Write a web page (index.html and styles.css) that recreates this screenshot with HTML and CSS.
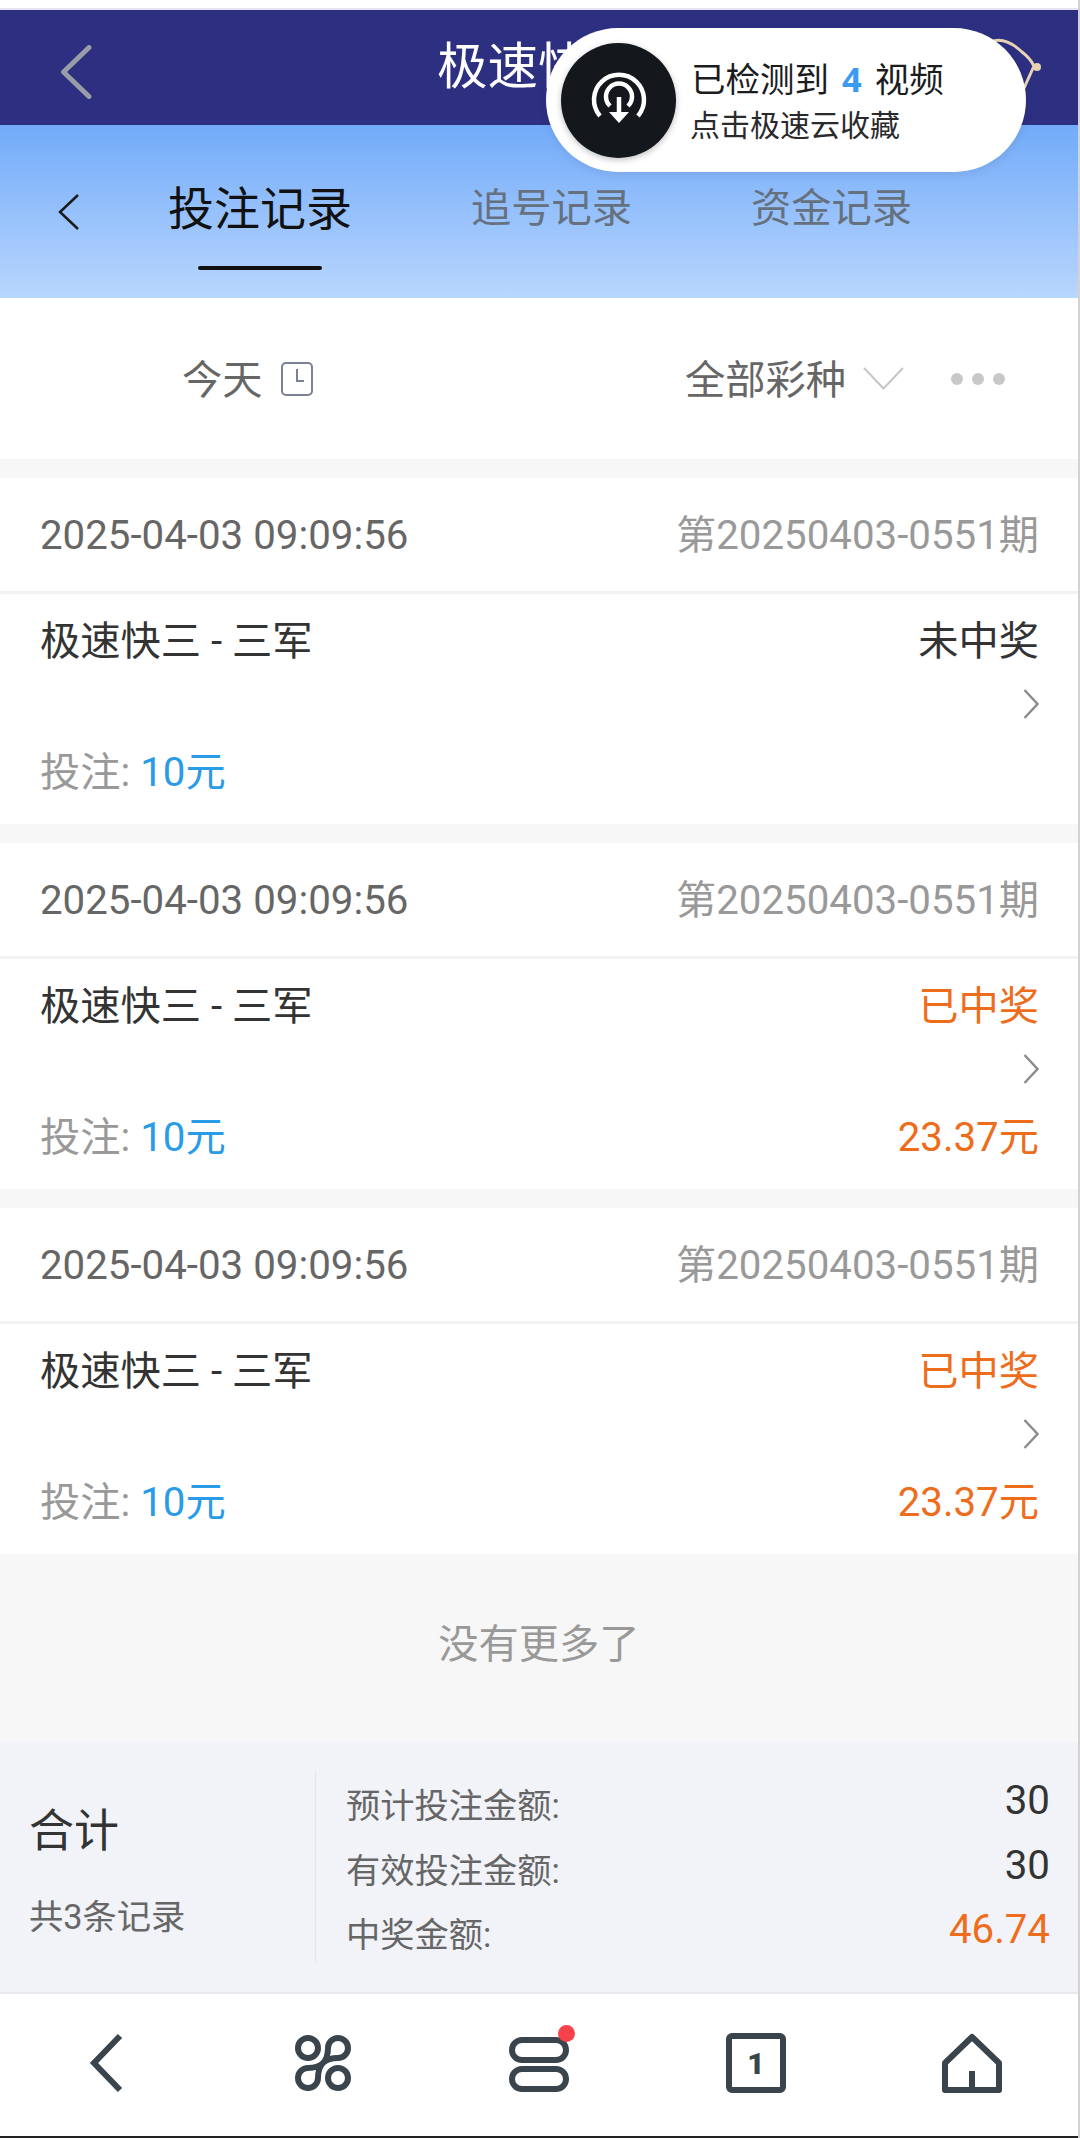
FILE: index.html
```html
<!DOCTYPE html>
<html lang="zh-CN">
<head>
<meta charset="utf-8">
<title>投注记录</title>
<link rel="stylesheet" href="styles.css">
</head>
<body>
<div class="page">
  <header class="topbar">
    <svg class="topbar-back" width="32" height="54" viewBox="0 0 32 54"><path d="M29 2.500 L3.500 27 L29 51.500" fill="none" stroke="#9a9ca8" stroke-width="5" stroke-linecap="round" stroke-linejoin="round"/></svg>
    <div class="topbar-title">极速快三</div>
    <svg class="topbar-logo" width="60" height="60" viewBox="0 0 60 60"><path d="M0 7 Q15 1 32 17 Q40 23 44 31 Q40 40 34 53" fill="none" stroke="#e8d3b5" stroke-width="3"/><circle cx="47" cy="32" r="4" fill="#e8d3b5"/></svg>
  </header>

  <aside class="toast">
    <div class="toast-icon">
      <svg width="60" height="60" viewBox="0 0 60 60"><path d="M11 46 A25 25 0 1 1 49 46" fill="none" stroke="#fff" stroke-width="4.500"/><path d="M21 36 A13 13 0 1 1 39 36" fill="none" stroke="#fff" stroke-width="4.500"/><path d="M30 27 V44" fill="none" stroke="#fff" stroke-width="4.500"/><path d="M20 42 H40 L30 53 Z" fill="#fff"/></svg>
    </div>
    <div class="toast-text">
      <div class="toast-line1">已检测到<span class="toast-count">4</span>视频</div>
      <div class="toast-line2">点击极速云收藏</div>
    </div>
  </aside>

  <nav class="tabs">
    <svg class="tabs-back" width="22" height="36" viewBox="0 0 22 36"><path d="M20 1 L2 18 L20 35" fill="none" stroke="#1a1a1a" stroke-width="2.500"/></svg>
    <div class="tab tab-active">投注记录</div>
    <div class="tab">追号记录</div>
    <div class="tab">资金记录</div>
  </nav>

  <section class="filters">
    <div class="filter-day">
      <span>今天</span>
      <svg width="32" height="34" viewBox="0 0 32 34"><rect x="1" y="1" width="30" height="32" rx="4" fill="none" stroke="#7a8196" stroke-width="2"/><path d="M16 7 V19 H23" fill="none" stroke="#7a8196" stroke-width="2"/></svg>
    </div>
    <div class="filter-kind">
      <span>全部彩种</span>
      <svg width="41" height="23" viewBox="0 0 41 23"><path d="M1 1 L20.500 21.500 L40 1" fill="none" stroke="#c6c6c6" stroke-width="2"/></svg>
      <div class="dots"><i></i><i></i><i></i></div>
    </div>
  </section>

  <main class="list">
    <article class="card">
      <div class="card-head"><span class="date">2025-04-03 09:09:56</span><span class="issue">第20250403-0551期</span></div>
      <div class="card-body">
        <div class="row"><span class="name">极速快三 - 三军</span><span class="status">未中奖</span></div>
        <svg class="more" width="16" height="30" viewBox="0 0 16 30"><path d="M1.500 1 L14.500 15 L1.500 29" fill="none" stroke="#8c8c8c" stroke-width="2.500"/></svg>
        <div class="row row-last"><span class="stake">投注: <b>10元</b></span></div>
      </div>
    </article>
    <article class="card">
      <div class="card-head"><span class="date">2025-04-03 09:09:56</span><span class="issue">第20250403-0551期</span></div>
      <div class="card-body">
        <div class="row"><span class="name">极速快三 - 三军</span><span class="status won">已中奖</span></div>
        <svg class="more" width="16" height="30" viewBox="0 0 16 30"><path d="M1.500 1 L14.500 15 L1.500 29" fill="none" stroke="#8c8c8c" stroke-width="2.500"/></svg>
        <div class="row row-last"><span class="stake">投注: <b>10元</b></span><span class="status won">23.37元</span></div>
      </div>
    </article>
    <article class="card">
      <div class="card-head"><span class="date">2025-04-03 09:09:56</span><span class="issue">第20250403-0551期</span></div>
      <div class="card-body">
        <div class="row"><span class="name">极速快三 - 三军</span><span class="status won">已中奖</span></div>
        <svg class="more" width="16" height="30" viewBox="0 0 16 30"><path d="M1.500 1 L14.500 15 L1.500 29" fill="none" stroke="#8c8c8c" stroke-width="2.500"/></svg>
        <div class="row row-last"><span class="stake">投注: <b>10元</b></span><span class="status won">23.37元</span></div>
      </div>
    </article>
    <div class="end-note">没有更多了</div>
  </main>

  <section class="summary">
    <div class="summary-left">
      <div class="summary-title">合计</div>
      <div class="summary-count">共3条记录</div>
    </div>
    <div class="summary-right">
      <div class="sum-row"><span>预计投注金额:</span><em>30</em></div>
      <div class="sum-row"><span>有效投注金额:</span><em>30</em></div>
      <div class="sum-row"><span>中奖金额:</span><em class="won">46.74</em></div>
    </div>
  </section>

  <footer class="bottombar">
    <svg width="60" height="60" viewBox="0 0 60 60"><path d="M44 3 L18 30 L44 57" fill="none" stroke="#3a444c" stroke-width="6"/></svg>
    <svg width="60" height="60" viewBox="-1 -1 60 60"><circle cx="14" cy="14" r="10" fill="none" stroke="#3a444c" stroke-width="6"/><circle cx="44" cy="44" r="10" fill="none" stroke="#3a444c" stroke-width="6"/><path d="M29 29 C32 26 34 22 34 14 A10 10 0 1 1 44 24 C36 24 32 26 29 29 C26 32 22 34 14 34 A10 10 0 1 0 24 44 C24 36 26 32 29 29 Z" fill="none" stroke="#3a444c" stroke-width="6" stroke-linejoin="round"/></svg>
    <div class="pills">
      <svg width="60" height="60" viewBox="0 0 60 60"><rect x="3" y="7" width="54" height="20" rx="10" fill="none" stroke="#3a444c" stroke-width="6"/><rect x="3" y="36" width="54" height="20" rx="10" fill="none" stroke="#3a444c" stroke-width="6"/></svg>
      <i class="red-dot"></i>
    </div>
    <svg width="60" height="60" viewBox="0 0 60 60"><rect x="3" y="3" width="54" height="54" rx="3" fill="none" stroke="#3a444c" stroke-width="6"/><text x="30" y="41" class="tab-count">1</text></svg>
    <svg width="60" height="60" viewBox="0 0 60 60"><path d="M30 4 L57 30 V57 H3 V30 Z M30 57 V38" fill="none" stroke="#3a444c" stroke-width="6" stroke-linejoin="round"/></svg>
  </footer>
</div>
</body>
</html>
```

FILE: styles.css
```css
* { box-sizing: border-box; }

html, body {
  margin: 0;
  padding: 0;
  background: #fff;
}

.page {
  position: relative;
  width: 1080px;
  height: 2138px;
  padding-top: 8px;
  border-right: 2px solid #d2d2d2;
  font-family: Roboto, "Noto Sans CJK SC", sans-serif;
  font-size: 40.25px;
  line-height: 60px;
  color: #333;
  overflow: hidden;
}

/* top bar */
.topbar {
  position: relative;
  display: flex;
  align-items: center;
  justify-content: center;
  height: 117px;
  background: #2d3080;
  border-top: 2px solid #e4e6f6;
}

.topbar-back {
  position: absolute;
  left: 60px;
  top: 35px;
}

.topbar-title {
  font-size: 50.5px;
  color: #fff;
  margin-right: 2px;
  margin-bottom: 2px;
}

.topbar-logo {
  position: absolute;
  right: 28px;
  top: 25px;
}

/* toast */
.toast {
  position: absolute;
  z-index: 2;
  left: 546px;
  top: 28px;
  width: 480px;
  height: 144px;
  padding-left: 15px;
  display: flex;
  align-items: center;
  gap: 15px;
  background: #fff;
  border-radius: 72px;
  box-shadow: 0 3px 10px rgba(0, 0, 0, 0.08);
}

.toast-icon {
  display: flex;
  align-items: center;
  justify-content: center;
  width: 115px;
  height: 115px;
  border-radius: 50%;
  background: #14171b;
  box-shadow: 0 2px 6px rgba(0, 0, 0, 0.25);
}

.toast-line1 {
  font-size: 34.5px;
  line-height: 46px;
  color: #1c1c1e;
}

.toast-count {
  margin: 0 13px;
  font-weight: 700;
  font-family: "Noto Sans", sans-serif;
  color: #3a9bf0;
}

.toast-line2 {
  margin: 4px 0 0 -1px;
  font-size: 30px;
  line-height: 38px;
  color: #2a2a2c;
}

/* tabs */
.tabs {
  position: relative;
  display: flex;
  align-items: flex-start;
  gap: 119px;
  height: 173px;
  padding: 54px 0 0 168px;
  background: linear-gradient(#72abf9, #b9d6fe);
}

.tabs-back {
  position: absolute;
  left: 58px;
  top: 69px;
}

.tab {
  display: flex;
  flex-direction: column;
  align-items: center;
  color: #667180;
  line-height: 60px;
}

.tab-active {
  font-size: 46px;
  color: #111;
}

.tab-active::after {
  content: "";
  display: block;
  width: 124px;
  height: 4px;
  margin-top: 27px;
  background: #111;
  border-radius: 2px;
}

/* filters */
.filters {
  display: flex;
  align-items: center;
  height: 161px;
  padding: 0 73px 0 182px;
  color: #666;
}

.filter-day,
.filter-kind {
  display: flex;
  align-items: center;
}

.filter-day {
  gap: 18px;
}

.filter-day span,
.filter-kind span {
  padding-top: 5px;
}

.filter-kind {
  margin-left: auto;
  gap: 17px;
}

.dots {
  display: flex;
  gap: 9px;
  margin-left: 30px;
}

.dots i {
  display: block;
  width: 12px;
  height: 12px;
  border-radius: 50%;
  background: #c8c8c8;
}

/* list */
.list {
  display: flex;
  flex-direction: column;
  gap: 19px;
  height: 1283px;
  padding-top: 19px;
  background: #f7f7f7;
}

.card {
  background: #fff;
}

.card-head {
  display: flex;
  align-items: center;
  justify-content: space-between;
  height: 116px;
  padding: 3px 39px 0 40px;
  border-bottom: 3px solid #f2f2f2;
}

.date {
  color: #666;
}

.issue {
  color: #999;
}

.card-body {
  display: flex;
  flex-direction: column;
  padding: 18px 39px 21px 40px;
}

.row {
  display: flex;
  justify-content: space-between;
  height: 60px;
}

.row-last {
  margin-top: 24px;
}

.more {
  align-self: flex-end;
  margin-top: 17px;
}

.stake {
  color: #999;
}

.stake b {
  font-weight: 400;
  color: #2a9be6;
}

.won {
  color: #ee6d1c;
}

.end-note {
  flex: 1;
  display: flex;
  align-items: center;
  justify-content: center;
  padding-bottom: 26px;
  color: #999;
}

/* summary */
.summary {
  display: flex;
  height: 252px;
  padding: 28px 28px 29px 0;
  background: #f1f3f8;
  border-bottom: 2px solid #e8e9ee;
}

.summary-left {
  width: 315px;
  padding: 32px 0 0 29px;
  flex: none;
}

.summary-title {
  font-size: 45px;
  line-height: 60px;
}

.summary-count {
  margin-top: 25px;
  font-size: 34.25px;
  line-height: 60px;
  color: #666;
}

.summary-right {
  flex: 1;
  display: flex;
  flex-direction: column;
  justify-content: space-between;
  padding-left: 30px;
  border-left: 1px solid #e6e7ec;
}

.sum-row {
  display: flex;
  justify-content: space-between;
  height: 64px;
  font-size: 34.25px;
  line-height: 72px;
  color: #666;
}

.sum-row em {
  font-style: normal;
  font-size: 40.25px;
  line-height: 62px;
  color: #333;
}

.sum-row em.won {
  color: #ee6d1c;
}

/* bottom bar */
.bottombar {
  display: flex;
  align-items: center;
  justify-content: space-between;
  height: 144px;
  padding: 0 76px 4px 76px;
  background: #fff;
  border-bottom: 2px solid #222;
}

.pills {
  position: relative;
  width: 60px;
  height: 60px;
}

.pills svg {
  display: block;
}

.red-dot {
  position: absolute;
  right: -6px;
  top: -8px;
  width: 17px;
  height: 17px;
  border-radius: 50%;
  background: #f6424a;
}

.tab-count {
  font-family: Roboto, sans-serif;
  font-size: 30px;
  font-weight: 900;
  fill: #3a444c;
  text-anchor: middle;
}
```
